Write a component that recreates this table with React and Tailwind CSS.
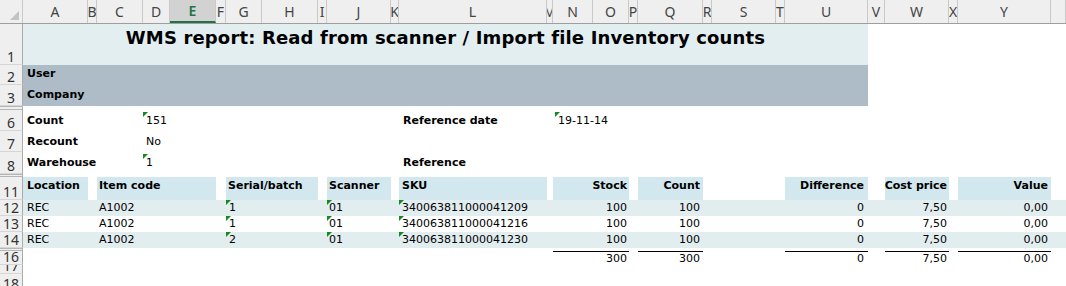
const G = "grid grid-cols-[23px_65px_9px_46px_27px_46px_10px_36px_56px_9px_64px_8px_148px_6px_40px_36px_9px_65px_9px_64px_9px_83px_17px_64px_9px_93px_15px]";

const letters = ['A','B','C','D','E','F','G','H','I','J','K','L','M','N','O','P','Q','R','S','T','U','V','W','X','Y',''];

function RowHead({ n }) {
  return (
    <div className="flex items-end justify-center overflow-hidden bg-[#efefef] border-r border-r-[#ababab] border-b border-b-[#d6d6d6] font-['Noto_Sans'] font-normal text-[14px] leading-[15px] text-[#333]">
      {n}
    </div>
  );
}

function Gap() {
  return (
    <div className="h-[3px] flex">
      <div className="w-[23px] h-[3px] border-t border-b border-[#b5b5b5] border-r border-r-[#ababab] bg-[#efefef]" />
    </div>
  );
}

function Tri() {
  return (
    <svg className="absolute left-0 top-0" width="5" height="5">
      <polygon points="0,0 5,0 0,5" fill="#13891f" />
    </svg>
  );
}

function Cell({ children, className = '', tri }) {
  return (
    <div className={`relative flex items-start whitespace-nowrap leading-[13px] ${className}`}>
      {tri && <Tri />}
      {children}
    </div>
  );
}

const skus = { 12: '340063811000041209', 13: '340063811000041216', 14: '340063811000041230' };

function DataRow({ n, band, serial }) {
  return (
    <div className={`${G} h-[16px] ${band ? 'bg-[#e2edf0]' : 'bg-white'}`}>
      <RowHead n={n} />
      <Cell className="pl-[4px] pt-[1px]">REC</Cell>
      <div />
      <Cell className="col-span-3 pl-[2px] pt-[1px]">A1002</Cell>
      <div />
      <Cell className="col-span-2 pl-[3px] pt-[1px]" tri>{serial}</Cell>
      <div />
      <Cell className="pl-[2px] pt-[1px]" tri>01</Cell>
      <div />
      <Cell className="pl-[3px] pt-[1px]" tri>{skus[n]}</Cell>
      <div />
      <Cell className="col-span-2 justify-end pr-[2px] pt-[1px]">100</Cell>
      <div />
      <Cell className="justify-end pr-[3px] pt-[1px]">100</Cell>
      <div className="col-span-3" />
      <Cell className="justify-end pr-[4px] pt-[1px]">0</Cell>
      <div />
      <Cell className="justify-end pr-[2px] pt-[1px]">7,50</Cell>
      <div />
      <Cell className="justify-end pr-[3px] pt-[1px]">0,00</Cell>
    </div>
  );
}

export default function App() {
  return (
    <div className="w-[1066px] h-[286px] overflow-hidden bg-white font-['DejaVu_Sans',Verdana,sans-serif] text-[11px] text-black">
      {/* column letters */}
      <div className={`${G} h-[24px] bg-[#efefef] border-b border-b-[#9e9e9e] font-['Noto_Sans'] text-[14px] text-[#444]`}>
        <div className="relative border-r border-r-[#c9c9c9]">
          <svg className="absolute right-[3px] bottom-[3px]" width="9" height="9">
            <polygon points="9,0 9,9 0,9" fill="#c3c3c3" />
          </svg>
        </div>
        {letters.map((l) =>
          l === 'E' ? (
            <div key={l} className="flex items-center justify-center bg-[#d2d2d2] border-b-2 border-b-[#217346] text-[#217346] font-semibold border-r border-r-[#c9c9c9]">
              {l}
            </div>
          ) : (
            <div key={l + 'x'} className="flex items-center justify-center border-r border-r-[#c9c9c9] overflow-hidden">
              {l}
            </div>
          )
        )}
      </div>

      {/* row 1 title */}
      <div className={`${G} h-[41px]`}>
        <RowHead n={1} />
        <div className="col-span-21 bg-[#e3eef1] flex justify-center pt-[3px]">
          <span className="font-bold text-[18px] leading-[22px] tracking-[0.15px] whitespace-nowrap">WMS report: Read from scanner / Import file Inventory counts</span>
        </div>
      </div>

      {/* rows 2-3 */}
      <div className={`${G} h-[20px]`}>
        <RowHead n={2} />
        <div className="col-span-21 bg-[#adbcc6] font-bold pl-[4px] pt-[2px] leading-[13px]">User</div>
      </div>
      <div className={`${G} h-[21px]`}>
        <RowHead n={3} />
        <div className="col-span-21 bg-[#adbcc6] font-bold pl-[4px] pt-[3px] leading-[13px]">Company</div>
      </div>
      <div className="h-[4px] flex">
        <div className="w-[23px] border-t border-b border-[#b5b5b5] border-r border-r-[#ababab] bg-[#efefef]" />
      </div>

      {/* rows 6-8 */}
      <div className={`${G} h-[21px]`}>
        <RowHead n={6} />
        <Cell className="col-span-3 font-bold pl-[4px] pt-[4px]">Count</Cell>
        <Cell className="col-span-8 pl-[3px] pt-[4px]"><span className="absolute left-0 top-[2px]"><Tri /></span>151</Cell>
        <Cell className="col-span-2 font-bold pl-[4px] pt-[4px]">Reference date</Cell>
        <Cell className="col-span-6 pl-[5px] pt-[4px]"><span className="absolute left-[2px] top-[2px]"><Tri /></span>19-11-14</Cell>
      </div>
      <div className={`${G} h-[21px]`}>
        <RowHead n={7} />
        <Cell className="col-span-3 font-bold pl-[4px] pt-[4px]">Recount</Cell>
        <Cell className="col-span-8 pl-[3px] pt-[4px]">No</Cell>
      </div>
      <div className={`${G} h-[22px]`}>
        <RowHead n={8} />
        <Cell className="col-span-3 font-bold pl-[4px] pt-[4px]">Warehouse</Cell>
        <Cell className="col-span-8 pl-[3px] pt-[4px]"><span className="absolute left-0 top-[2px]"><Tri /></span>1</Cell>
        <Cell className="col-span-2 font-bold pl-[4px] pt-[4px]">Reference</Cell>
      </div>
      <Gap />

      {/* row 11 headers */}
      <div className={`${G} h-[23px] font-bold`}>
        <RowHead n={11} />
        <Cell className="bg-[#d3e7ee] pl-[4px] pt-[2px]">Location</Cell>
        <div />
        <Cell className="col-span-3 bg-[#d3e7ee] pl-[2px] pt-[2px]">Item code</Cell>
        <div />
        <Cell className="col-span-2 bg-[#d3e7ee] pl-[2px] pt-[2px]">Serial/batch</Cell>
        <div />
        <Cell className="bg-[#d3e7ee] pl-[2px] pt-[2px]">Scanner</Cell>
        <div />
        <Cell className="bg-[#d3e7ee] pl-[3px] pt-[2px]">SKU</Cell>
        <div />
        <Cell className="col-span-2 bg-[#d3e7ee] justify-end pr-[2px] pt-[2px]">Stock</Cell>
        <div />
        <Cell className="bg-[#d3e7ee] justify-end pr-[3px] pt-[2px]">Count</Cell>
        <div className="col-span-3" />
        <Cell className="bg-[#d3e7ee] justify-end pr-[4px] pt-[2px]">Difference</Cell>
        <div />
        <Cell className="bg-[#d3e7ee] justify-end pr-[2px] pt-[2px]">Cost price</Cell>
        <div />
        <Cell className="bg-[#d3e7ee] justify-end pr-[3px] pt-[2px]">Value</Cell>
      </div>

      <DataRow n={12} band serial="1" />
      <DataRow n={13} serial="1" />
      <DataRow n={14} band serial="2" />
      <Gap />

      {/* row 16 totals */}
      <div className={`${G} h-[14px]`}>
        <RowHead n={16} />
        <div className="col-span-13" />
        <Cell className="col-span-2 justify-end pr-[2px] border-t border-black">300</Cell>
        <div />
        <Cell className="justify-end pr-[3px] border-t border-black">300</Cell>
        <div className="col-span-3" />
        <Cell className="justify-end pr-[4px] border-t border-black">0</Cell>
        <div />
        <Cell className="justify-end pr-[2px] border-t border-black">7,50</Cell>
        <div />
        <Cell className="justify-end pr-[3px] border-t border-black">0,00</Cell>
      </div>
      <div className={`${G} h-[9px]`}>
        <RowHead n={17} />
      </div>
      <div className={`${G} h-[18px]`}>
        <RowHead n={18} />
      </div>
    </div>
  );
}
